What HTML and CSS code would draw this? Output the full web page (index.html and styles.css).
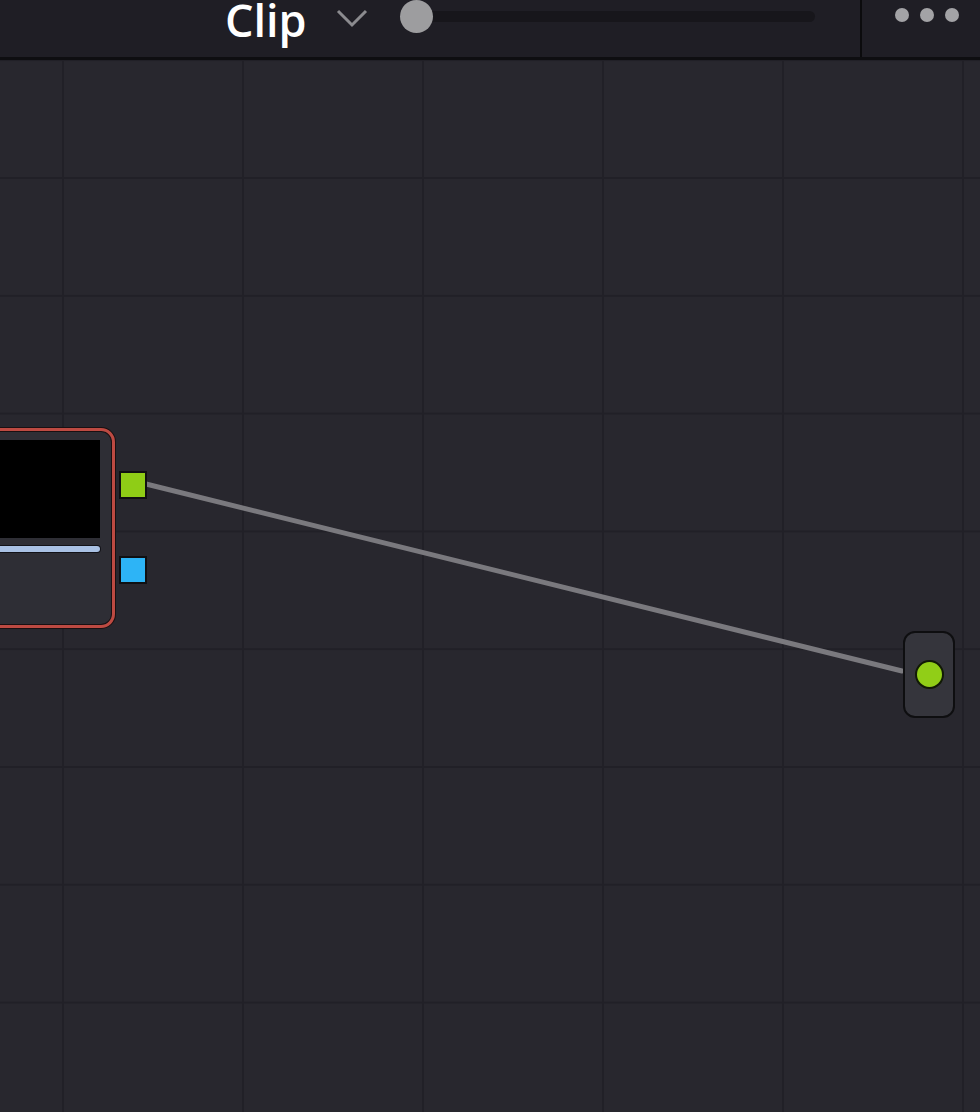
FILE: index.html
```html
<!DOCTYPE html>
<html lang="en">
<head>
    <meta charset="UTF-8">
    <meta name="viewport" content="width=device-width, initial-scale=1.0">
    <title>Node Editor</title>
    <link rel="stylesheet" href="styles.css">
</head>
<body>

    <div class="header">
        <div class="title">Clip</div>
        <svg class="chevron" width="32" height="20" viewBox="0 0 32 20">
            <polyline points="2,3 16,17 30,3" fill="none" stroke="#8b8b8f" stroke-width="3"/>
        </svg>
        <div class="slider">
            <div class="track"></div>
            <div class="knob"></div>
        </div>
        <div class="divider"></div>
        <div class="more">
            <span class="dot"></span>
            <span class="dot"></span>
            <span class="dot"></span>
        </div>
    </div>

    <div class="canvas">
        <svg class="links" width="980" height="1052">
            <line x1="146" y1="424" x2="902" y2="611" stroke="#7a797e" stroke-width="5" stroke-linecap="round"/>
        </svg>

        <div class="node">
            <div class="thumb"></div>
            <div class="bar"></div>
        </div>
        <div class="port port-green"></div>
        <div class="port port-blue"></div>

        <div class="output">
            <div class="output-dot"></div>
        </div>
    </div>

</body>
</html>
```

FILE: styles.css
```css
body {
    margin: 0;
    padding: 0;
    background-color: #28272e;
    font-family: "Open Sans", "Noto Sans", sans-serif;
    overflow: hidden;
}

.header {
    height: 57px;
    display: flex;
    align-items: flex-start;
    background-color: #1f1e25;
    border-bottom: 3px solid #0e0e11;
    overflow: hidden;
}

.title {
    margin-left: 225px;
    margin-top: -10px;
    font-size: 45px;
    font-weight: 600;
    line-height: 60px;
    color: #ffffff;
}

.chevron {
    margin-left: 29px;
    margin-top: 8px;
}

.slider {
    position: relative;
    margin-left: 32px;
    width: 415px;
    height: 34px;
}

.track {
    position: absolute;
    left: 16px;
    right: 0;
    top: 11px;
    height: 11px;
    border-radius: 6px;
    background-color: #17161b;
}

.knob {
    position: absolute;
    left: 0;
    top: 0;
    width: 33px;
    height: 33px;
    border-radius: 50%;
    background-color: #9d9d9f;
}

.divider {
    margin-left: 45px;
    width: 2px;
    height: 57px;
    background-color: #0b0b0d;
}

.more {
    display: flex;
    gap: 11px;
    margin-left: 33px;
    margin-top: 8px;
}

.dot {
    width: 14px;
    height: 14px;
    border-radius: 50%;
    background-color: #a3a3a6;
}

/* node graph */
.canvas {
    position: relative;
    height: 1052px;
    background-color: #28272e;
    background-image:
        linear-gradient(to right, #212027 0, #212027 2px, transparent 2px),
        linear-gradient(to bottom, #212027 0, #212027 2px, transparent 2px);
    background-size: 180px 117.8px;
    background-position: 62px 0, 0 117px;
}

.links {
    position: absolute;
    left: 0;
    top: 0;
}

.node {
    position: absolute;
    left: -60px;
    top: 368px;
    width: 175px;
    height: 200px;
    padding: 9px 12px 0 0;
    box-sizing: border-box;
    display: flex;
    flex-direction: column;
    align-items: flex-end;
    gap: 8px;
    background-color: #2e2e35;
    border: 3px solid #bd4a42;
    border-radius: 14px;
    box-shadow: inset 0 0 0 1px #1a1012, 0 0 0 1px #1a1012;
}

.thumb {
    width: 160px;
    height: 98px;
    background-color: #000000;
}

.bar {
    width: 160px;
    height: 6px;
    border-radius: 3px;
    background-color: #a9c1e4;
    box-shadow: 0 0 0 1px #121218;
}

.port {
    position: absolute;
    left: 119px;
    width: 24px;
    height: 24px;
    border: 2px solid #101012;
}

.port-green {
    top: 411px;
    background-color: #8fcd16;
}

.port-blue {
    top: 496px;
    background-color: #2db4f6;
}

.output {
    position: absolute;
    left: 903px;
    top: 571px;
    width: 48px;
    height: 83px;
    display: flex;
    align-items: center;
    justify-content: center;
    background-color: #35353c;
    border: 2px solid #0e0e10;
    border-radius: 12px;
}

.output-dot {
    width: 25px;
    height: 25px;
    border-radius: 50%;
    background-color: #91ce17;
    border: 2px solid #121a06;
}
```
